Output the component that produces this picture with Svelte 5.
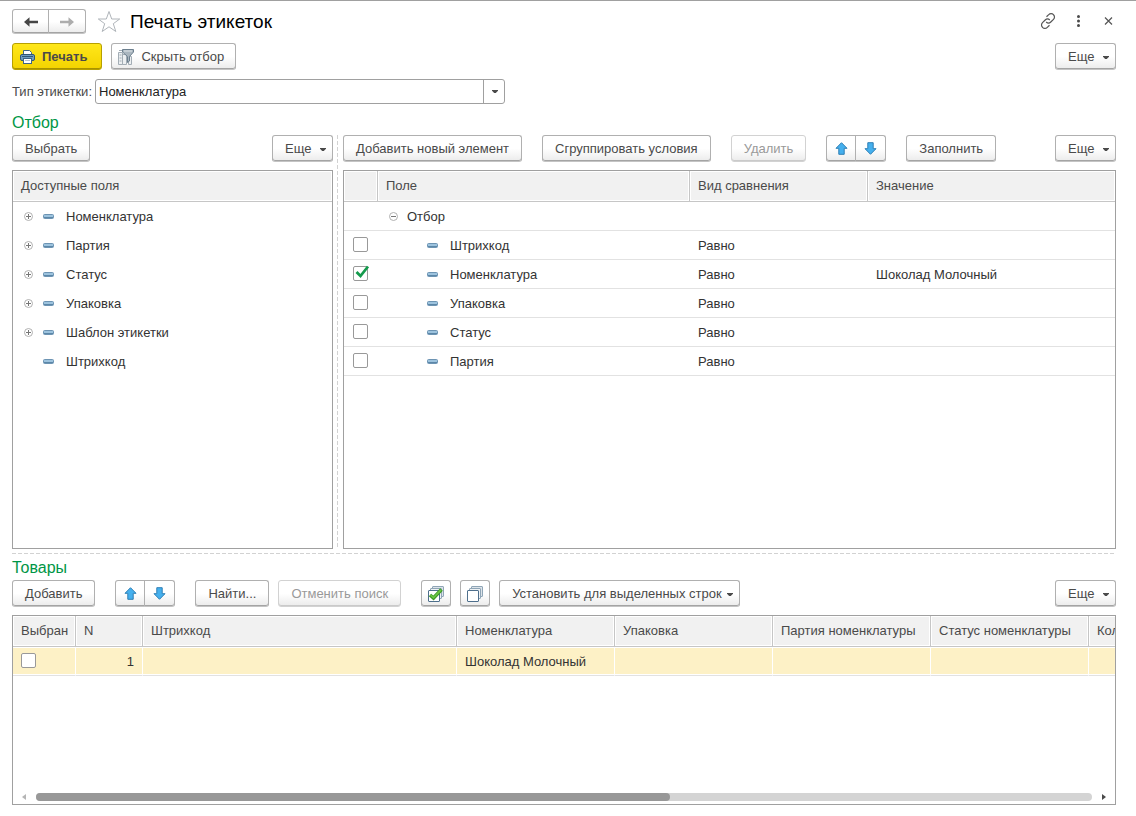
<script lang="ts">
  type Condition = { field: string; comparison: string; value: string; used: boolean };

  let fields = [
    { name: 'Номенклатура', nested: true },
    { name: 'Партия', nested: true },
    { name: 'Статус', nested: true },
    { name: 'Упаковка', nested: true },
    { name: 'Шаблон этикетки', nested: true },
    { name: 'Штрихкод', nested: false }
  ];

  let conditions: Condition[] = $state([
    { field: 'Штрихкод', comparison: 'Равно', value: '', used: false },
    { field: 'Номенклатура', comparison: 'Равно', value: 'Шоколад Молочный', used: true },
    { field: 'Упаковка', comparison: 'Равно', value: '', used: false },
    { field: 'Статус', comparison: 'Равно', value: '', used: false },
    { field: 'Партия', comparison: 'Равно', value: '', used: false }
  ]);

  let goods = $state([{ selected: false, n: 1, barcode: '', item: 'Шоколад Молочный' }]);

  let labelType = $state('Номенклатура');
  let scrolled = 60;
</script>

{#snippet caret()}
  <svg class="caret" width="6" height="3" viewBox="0 0 6 3" aria-hidden="true">
    <path d="M0 0h6v.8L3.800 3H2.200L0 .8z" fill="#4a4a4a" />
  </svg>
{/snippet}

{#snippet more()}
  <button type="button" class="btn menu more">Еще {@render caret()}</button>
{/snippet}

{#snippet arrows()}
  <div class="group">
    <button type="button" class="btn icon" aria-label="Вверх">
      <svg width="13" height="13" viewBox="0 0 13 13">
        <path d="M6.500 .7 12 6.300H9.200v6H3.800v-6H1z" fill="#45b0ee" stroke="#2e7fb5" />
      </svg>
    </button>
    <button type="button" class="btn icon" aria-label="Вниз">
      <svg width="13" height="13" viewBox="0 0 13 13">
        <path d="M6.500 12.300 12 6.700H9.200v-6H3.800v6H1z" fill="#45b0ee" stroke="#2e7fb5" />
      </svg>
    </button>
  </div>
{/snippet}

{#snippet dash()}
  <svg class="dash" width="11" height="5" viewBox="0 0 11 5" aria-hidden="true">
    <rect x=".5" y=".5" width="10" height="4" rx="1" fill="#9dc3de" stroke="#6d94b3" />
    <path d="M1 3.500h9" stroke="#5c87a8" />
  </svg>
{/snippet}

{#snippet sheets(checked: boolean)}
  <svg width="16" height="16" viewBox="0 0 16 16" aria-hidden="true">
    <rect x="4.500" y=".5" width="11" height="10" rx=".5" fill="#dde4ea" stroke="#8fa5b6" />
    <rect x="2.500" y="2.500" width="11" height="10" rx=".5" fill="#eef2f5" stroke="#8fa5b6" />
    <rect x=".5" y="4.500" width="11" height="11" rx=".5" fill="#fff" stroke="#4e6f8c" />
    {#if checked}
      <path d="M2 9 5.500 12 13.500 3.500" fill="none" stroke="#3d9a26" stroke-width="3.600" />
      <path d="M2.500 9 5.500 11.700 13 3.900" fill="none" stroke="#6cc644" stroke-width="1.600" />
    {/if}
  </svg>
{/snippet}

<main class="form">
  <header class="title-bar">
    <div class="group nav">
      <button type="button" class="btn" aria-label="Назад">
        <svg width="14" height="10" viewBox="0 0 14 10">
          <path d="M0 5 5.500 .3v3.500H14v2.400H5.500v3.500z" fill="#454545" />
        </svg>
      </button>
      <button type="button" class="btn" aria-label="Вперед">
        <svg width="14" height="10" viewBox="0 0 14 10">
          <path d="M14 5 8.500 .3v3.500H0v2.400h8.500v3.500z" fill="#adadad" />
        </svg>
      </button>
    </div>
    <button type="button" class="plain star" aria-label="В избранное">
      <svg width="24" height="23" viewBox="0 0 24 23">
        <path d="M12 1.500 14.700 9h8L16.300 13.700 18.800 21.500 12 16.800 5.200 21.500 7.700 13.700 1.300 9h8z" fill="#fff" stroke="#b0b5ba" />
      </svg>
    </button>
    <h1>Печать этикеток</h1>
    <div class="window-tools">
      <button type="button" class="plain" aria-label="Ссылка">
        <svg width="16" height="16" viewBox="0 0 16 16" fill="none" stroke="#555" stroke-width="1.200">
          <path d="M6.500 3.800 8.700 1.700a3.300 3.300 0 0 1 4.800 0 3.300 3.300 0 0 1 0 4.700L10.800 9a3.300 3.300 0 0 1-4.600 0" />
          <path d="M9.500 12.200 7.300 14.300a3.300 3.300 0 0 1-4.800 0 3.300 3.300 0 0 1 0-4.700L5.200 7a3.300 3.300 0 0 1 4.600 0" />
        </svg>
      </button>
      <button type="button" class="plain" aria-label="Меню">
        <svg width="16" height="16" viewBox="0 0 16 16" fill="#4a4a4a">
          <circle cx="8.500" cy="3.500" r="1.500" /><circle cx="8.500" cy="8" r="1.500" /><circle cx="8.500" cy="12.500" r="1.500" />
        </svg>
      </button>
      <button type="button" class="plain" aria-label="Закрыть">
        <svg width="16" height="16" viewBox="0 0 16 16" stroke="#555" stroke-width="1.200">
          <path d="M5 4.500l7 7M12 4.500l-7 7" />
        </svg>
      </button>
    </div>
  </header>

  <div class="toolbar commands">
    <button type="button" class="btn primary">
      <svg width="15" height="14" viewBox="0 0 15 14" aria-hidden="true">
        <path d="M3.500 5V.5h6l2 2V5" fill="#fff" stroke="#3f6587" />
        <rect x=".5" y="4.500" width="14" height="6" rx="1.500" fill="#6f9cc0" stroke="#2f5677" />
        <path d="M2 6.500h11" stroke="#2f5677" />
        <rect x="3.500" y="8.500" width="8" height="5" fill="#fff" stroke="#3f6587" />
        <path d="M5 10.500h5" stroke="#b9c7d3" />
      </svg>
      Печать
    </button>
    <button type="button" class="btn with-icon">
      <svg width="16" height="16" viewBox="0 0 16 16" aria-hidden="true">
        <path d="M.5 15.500v-12h4v12zM4.500 15.500v-10h4v10zM10.500 15.500v-8h3v8z" fill="#eceff1" stroke="#a3adb5" />
        <path d="M1 1.500h4M1.500 6h2M1.500 9h2M1.500 12h2" stroke="#a3adb5" />
        <path d="M4.500 .5h11v2.500L11.500 7.500v4.500l-2 1.500v-6L4.500 3z" fill="#aab6bf" stroke="#6c7f8e" />
        <path d="M6 2h8" stroke="#dfe5e9" />
      </svg>
      Скрыть отбор
    </button>
    <span class="spacer"></span>
    {@render more()}
  </div>

  <div class="type-row">
    <label for="label-type">Тип этикетки:</label>
    <div class="combo">
      <select id="label-type" bind:value={labelType}>
        <option>Номенклатура</option>
      </select>
      <span class="drop">{@render caret()}</span>
    </div>
  </div>

  <h2>Отбор</h2>
  <div class="split">
    <section class="pane">
      <div class="toolbar">
        <button type="button" class="btn">Выбрать</button>
        <span class="spacer"></span>
        {@render more()}
      </div>
      <div class="box">
        <div class="list-head">Доступные поля</div>
        <ul>
          {#each fields as field (field.name)}
            <li>
              <span class="toggle-slot">
                {#if field.nested}
                  <button type="button" class="plain toggle" aria-label="Развернуть">
                    <svg width="9" height="9" viewBox="0 0 9 9" fill="none">
                      <circle cx="4.500" cy="4.500" r="4" stroke="#b0b0b0" />
                      <path d="M2 4.500h5M4.500 2v5" stroke="#777" />
                    </svg>
                  </button>
                {/if}
              </span>
              {@render dash()}
              <span>{field.name}</span>
            </li>
          {/each}
        </ul>
      </div>
    </section>

    <div class="splitter"></div>

    <section class="pane">
      <div class="toolbar wide">
        <button type="button" class="btn">Добавить новый элемент</button>
        <button type="button" class="btn">Сгруппировать условия</button>
        <button type="button" class="btn" disabled>Удалить</button>
        {@render arrows()}
        <button type="button" class="btn">Заполнить</button>
        <span class="spacer"></span>
        {@render more()}
      </div>
      <div class="box">
        <table class="conditions">
          <colgroup>
            <col class="c-use" /><col class="c-field" /><col class="c-kind" /><col />
          </colgroup>
          <thead>
            <tr><th></th><th>Поле</th><th>Вид сравнения</th><th>Значение</th></tr>
          </thead>
          <tbody>
            <tr>
              <td></td>
              <td>
                <div class="node root">
                  <button type="button" class="plain toggle" aria-label="Свернуть">
                    <svg width="9" height="9" viewBox="0 0 9 9" fill="none">
                      <circle cx="4.500" cy="4.500" r="4" stroke="#b0b0b0" />
                      <path d="M2 4.500h5" stroke="#777" />
                    </svg>
                  </button>
                  Отбор
                </div>
              </td>
              <td></td>
              <td></td>
            </tr>
            {#each conditions as row (row.field)}
              <tr>
                <td>
                  <span class="check">
                    <input type="checkbox" aria-label={row.field} bind:checked={row.used} />
                    {#if row.used}
                      <svg width="15" height="14" viewBox="0 0 15 14" aria-hidden="true">
                        <path d="M1.500 7 5.500 11 13 1.500" fill="none" stroke="#149a4c" stroke-width="2.800" />
                      </svg>
                    {/if}
                  </span>
                </td>
                <td><div class="node leaf">{@render dash()}{row.field}</div></td>
                <td>{row.comparison}</td>
                <td>{row.value}</td>
              </tr>
            {/each}
          </tbody>
        </table>
      </div>
    </section>
  </div>

  <div class="h-splitter"></div>

  <h2>Товары</h2>
  <div class="toolbar goods-bar">
    <button type="button" class="btn">Добавить</button>
    <span class="gap"></span>
    {@render arrows()}
    <span class="gap"></span>
    <button type="button" class="btn">Найти...</button>
    <button type="button" class="btn" disabled>Отменить поиск</button>
    <span class="gap"></span>
    <button type="button" class="btn icon" aria-label="Установить флажки">{@render sheets(true)}</button>
    <button type="button" class="btn icon" aria-label="Снять флажки">{@render sheets(false)}</button>
    <button type="button" class="btn menu">Установить для выделенных строк {@render caret()}</button>
    <span class="spacer"></span>
    {@render more()}
  </div>
  <div class="box goods-box">
    <table class="goods">
      <colgroup>
        <col class="g-pick" /><col class="g-num" /><col class="g-code" />
        <col class="g-item" /><col class="g-item" /><col class="g-item" /><col class="g-item" /><col class="g-item" />
      </colgroup>
      <thead>
        <tr>
          <th>Выбран</th>
          <th>N</th>
          <th>Штрихкод</th>
          <th>Номенклатура</th>
          <th>Упаковка</th>
          <th>Партия номенклатуры</th>
          <th>Статус номенклатуры</th>
          <th>Кол</th>
        </tr>
      </thead>
      <tbody>
        {#each goods as row (row.n)}
          <tr class="current">
            <td><span class="check"><input type="checkbox" aria-label="Выбран" bind:checked={row.selected} /></span></td>
            <td class="num">{row.n}</td>
            <td>{row.barcode}</td>
            <td>{row.item}</td>
            <td></td>
            <td></td>
            <td></td>
            <td></td>
          </tr>
        {/each}
      </tbody>
    </table>
    <div class="scroll">
      <svg width="4" height="6" viewBox="0 0 4 6" aria-hidden="true"><path d="M4 0v6L0 3z" fill="#b5b5b5" /></svg>
      <div class="track"><div class="thumb" style:width="{scrolled}%"></div></div>
      <svg width="4" height="6" viewBox="0 0 4 6" aria-hidden="true"><path d="M0 0v6l4-3z" fill="#4a4a4a" /></svg>
    </div>
  </div>
</main>

<style>
  :global(body) {
    background: #fff;
  }

  .form {
    --line: #a0a0a0;
    box-sizing: border-box;
    display: flex;
    flex-direction: column;
    min-height: 100vh;
    padding: 8px 20px 11px 12px;
    border-top: 1px solid var(--line);
    font-family: 'Liberation Sans', Arial, sans-serif;
    font-size: 13px;
    line-height: 16px;
    color: #333;
  }

  .form * {
    box-sizing: border-box;
  }

  button,
  select {
    font: inherit;
    color: #4a4a4a;
  }

  svg {
    display: block;
    flex: none;
  }

  h1 {
    margin: 0;
    font-size: 19px;
    font-weight: 400;
    line-height: 24px;
    color: #000;
  }

  h2 {
    margin: 0;
    padding-top: 9px;
    font-size: 16px;
    font-weight: 400;
    line-height: 20px;
    color: #009646;
  }

  /* Buttons */
  .btn {
    display: inline-flex;
    align-items: center;
    justify-content: center;
    height: 27px;
    padding: 1px 12px 0;
    border: 1px solid #b0b0b0;
    border-bottom-color: #c4c4c4;
    border-radius: 3px;
    background: linear-gradient(#fff 50%, #ebebeb);
    box-shadow: inset 0 -1px #a4a4a4;
    white-space: nowrap;
  }

  .btn:disabled {
    border-color: #d2d2d2;
    box-shadow: inset 0 -1px #cacaca;
    color: #999;
  }

  .btn.primary {
    gap: 7px;
    padding: 0 14px 0 7px;
    border-color: #b7a000;
    background: linear-gradient(#ffe71a, #f3d300);
    box-shadow: inset 0 -1px #a89200;
    font-weight: 700;
  }

  .btn.with-icon {
    gap: 7px;
    padding: 0 11px 0 6px;
  }

  .btn.icon {
    width: 30px;
    padding: 0;
  }

  .btn.menu {
    gap: 5px;
    justify-content: space-between;
    padding: 1px 6px 0 12px;
  }

  .more {
    width: 61px;
  }

  .plain {
    display: flex;
    padding: 0;
    border: 0;
    background: none;
  }

  .group {
    display: flex;
  }

  .group .btn:first-child {
    border-radius: 3px 0 0 3px;
  }

  .group .btn:last-child {
    border-left: 0;
    border-radius: 0 3px 3px 0;
  }

  /* Header */
  .title-bar {
    display: flex;
    align-items: center;
    height: 25px;
  }

  .nav .btn {
    width: 37px;
    height: 25px;
    padding: 0;
  }

  .star {
    margin: 0 9px 0 11px;
  }

  .window-tools {
    display: flex;
    gap: 14px;
    margin-left: auto;
    padding-bottom: 2px;
  }

  .toolbar {
    display: flex;
    gap: 9px;
  }

  .commands {
    margin-top: 9px;
  }

  .spacer {
    flex: 1;
  }

  .type-row {
    display: flex;
    align-items: center;
    gap: 3px;
    margin-top: 9px;
    color: #4a4a4a;
  }

  .combo {
    position: relative;
    width: 410px;
  }

  select {
    display: block;
    width: 100%;
    height: 25px;
    padding: 0 24px 0 3px;
    border: 1px solid var(--line);
    border-radius: 3px;
    appearance: none;
    background: #fff;
    color: #222;
  }

  .drop {
    position: absolute;
    inset: 0 0 0 auto;
    display: grid;
    place-items: center;
    width: 22px;
    border-left: 1px solid var(--line);
    pointer-events: none;
  }

  /* Filter panes */
  .split {
    display: grid;
    grid-template-columns: minmax(0, 321fr) 10px minmax(0, 773fr);
    flex: 1 0 auto;
    margin-top: 2px;
  }

  .pane {
    display: flex;
    flex-direction: column;
  }

  .box {
    flex: 1;
    margin-top: 8px;
    border: 1px solid var(--line);
  }

  .splitter {
    width: 1px;
    margin-left: 4px;
    background: repeating-linear-gradient(#d2d2d2 0 4px, #fff 4px 6px);
  }

  .h-splitter {
    height: 1px;
    margin-top: 4px;
    background: repeating-linear-gradient(90deg, #d2d2d2 0 4px, #fff 4px 6px);
  }

  .h-splitter + h2 {
    padding-top: 4px;
  }

  .wide {
    gap: 20px;
  }

  .list-head,
  th {
    height: 31px;
    padding: 0 8px;
    border-bottom: 1px solid #c6c6c6;
    background: #f1f1f1;
    box-shadow: inset 0 0 0 1px #fff;
    font-weight: 400;
    line-height: 30px;
    text-align: left;
    color: #4a4a4a;
  }

  ul {
    margin: 0;
    padding: 0;
    list-style: none;
  }

  li {
    display: flex;
    align-items: center;
    height: 29px;
    padding-left: 11px;
  }

  .toggle-slot {
    width: 19px;
  }

  .dash {
    margin-right: 12px;
  }

  table {
    width: 100%;
    border-collapse: separate;
    border-spacing: 0;
    table-layout: fixed;
  }

  th:not(:last-child) {
    border-right: 1px solid #c6c6c6;
  }

  th,
  td {
    overflow: hidden;
    white-space: nowrap;
  }

  td {
    height: 29px;
    padding: 1px 8px 0;
    border-bottom: 1px solid #e2e2e2;
  }

  .c-use {
    width: 34px;
  }

  .c-field {
    width: 312px;
  }

  .c-kind {
    width: 178px;
  }

  .node {
    display: flex;
    align-items: center;
  }

  .root {
    gap: 9px;
    padding-left: 3px;
  }

  .leaf {
    padding-left: 41px;
  }

  .check {
    position: relative;
    display: block;
    width: 17px;
    height: 15px;
    margin-bottom: 2px;
  }

  .check input {
    display: block;
    width: 15px;
    height: 15px;
    margin: 0 1px;
    border: 1px solid #999;
    border-radius: 2px;
    appearance: none;
    background: #fff;
  }

  .check svg {
    position: absolute;
    top: -1px;
    left: 3px;
  }

  /* Goods */
  .goods-bar {
    margin-top: 2px;
  }

  .gap {
    width: 2px;
  }

  .goods-box {
    display: flex;
    flex: 0 0 190px;
    flex-direction: column;
    justify-content: space-between;
    overflow: hidden;
  }

  .goods {
    width: 1234px;
  }

  .g-pick {
    width: 63px;
  }

  .g-num {
    width: 67px;
  }

  .g-code {
    width: 314px;
  }

  .g-item {
    width: 158px;
  }

  .current td {
    border-right: 1px solid #fff;
    background: #fdf1c6;
    box-shadow: inset 0 1px #fff, inset 0 -1px #fff;
  }

  .current .check input {
    margin: 0;
  }

  .num {
    text-align: right;
  }

  .scroll {
    display: flex;
    align-items: center;
    gap: 10px;
    padding: 0 9px 3px;
  }

  .track {
    flex: 1;
    height: 8px;
    border-radius: 4px;
    background: #d4d4d4;
  }

  .thumb {
    height: 8px;
    border-radius: 4px;
    background: #989898;
  }
</style>
